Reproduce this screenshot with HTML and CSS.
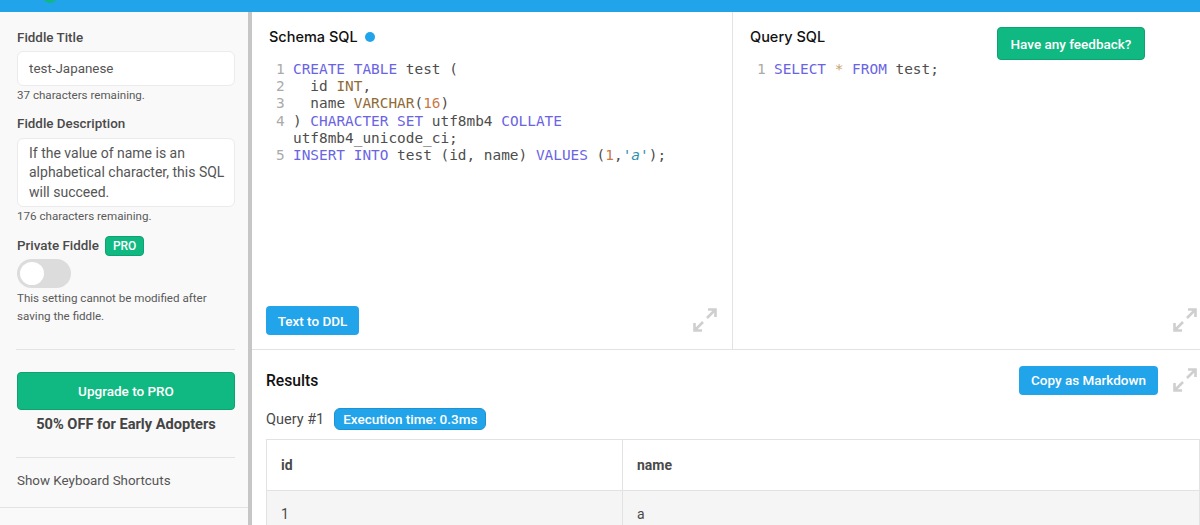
FILE: index.html
```html
<!DOCTYPE html>
<html lang="en">
<head>
  <meta charset="UTF-8">
  <meta name="viewport" content="width=device-width, initial-scale=1.0">
  <title>Fiddle</title>
  <link rel="stylesheet" href="styles.css">
</head>
<body>

  <!-- Top bar, logo is cut off by the window -->
  <header class="topbar">
    <span class="logo-edge"></span>
  </header>

  <div class="layout">
    <!-- Sidebar -->
    <aside class="sidebar">
      <div class="side-form">
        <label class="side-label">Fiddle Title</label>
        <div class="text-field">test-Japanese</div>
        <p class="hint">37 characters remaining.</p>

        <label class="side-label desc-label">Fiddle Description</label>
        <div class="text-area">
          <div>for the name column.</div>
          <div>If the value of name is an</div>
          <div>alphabetical character, this SQL</div>
          <div>will succeed.</div>
        </div>
        <p class="hint">176 characters remaining.</p>

        <div class="private-row">
          <span class="side-label">Private Fiddle</span>
          <span class="pro-badge">PRO</span>
        </div>
        <div class="toggle"><span class="toggle-knob"></span></div>
        <p class="hint setting-note">This setting cannot be modified after saving the fiddle.</p>
      </div>

      <div class="upgrade">
        <button class="btn btn-green upgrade-btn">Upgrade to PRO</button>
        <p class="upgrade-note">50% OFF for Early Adopters</p>
      </div>

      <div class="shortcuts">Show Keyboard Shortcuts</div>
      <div class="side-end"></div>
    </aside>

    <main class="content">
      <!-- Editors -->
      <section class="editors">
        <div class="editor editor-schema">
          <h2 class="editor-title">Schema SQL <span class="dirty-dot"></span></h2>
          <div class="code">
            <div class="line"><span class="num">1</span><span class="src"><span class="kw">CREATE</span> <span class="kw">TABLE</span> test (</span></div>
            <div class="line"><span class="num">2</span><span class="src">  id <span class="type">INT</span>,</span></div>
            <div class="line"><span class="num">3</span><span class="src">  name <span class="type">VARCHAR</span>(<span class="number">16</span>)</span></div>
            <div class="line"><span class="num">4</span><span class="src">) <span class="kw">CHARACTER</span> <span class="kw">SET</span> utf8mb4 <span class="kw">COLLATE</span> utf8mb4_unicode_ci;</span></div>
            <div class="line"><span class="num">5</span><span class="src"><span class="kw">INSERT</span> <span class="kw">INTO</span> test (id, name) <span class="kw">VALUES</span> (<span class="number">1</span>,<span class="string">'a'</span>);</span></div>
          </div>
          <div class="editor-foot">
            <button class="btn btn-blue ddl-btn">Text to DDL</button>
            <svg class="expand" viewBox="0 0 24 24"><path d="M15 1.5h7.5V9M22.5 1.5 14 10M1.5 15v7.5H9M1.5 22.5 10 14"/></svg>
          </div>
        </div>

        <div class="editor editor-query">
          <h2 class="editor-title">Query SQL</h2>
          <div class="code">
            <div class="line"><span class="num">1</span><span class="src"><span class="kw">SELECT</span> <span class="op">*</span> <span class="kw">FROM</span> test;</span></div>
          </div>
          <div class="editor-foot foot-right">
            <svg class="expand" viewBox="0 0 24 24"><path d="M15 1.5h7.5V9M22.5 1.5 14 10M1.5 15v7.5H9M1.5 22.5 10 14"/></svg>
          </div>
        </div>

        <button class="btn btn-green feedback-btn">Have any feedback?</button>
      </section>

      <!-- Results -->
      <section class="results">
        <div class="results-head">
          <h2 class="results-title">Results</h2>
          <button class="btn btn-blue copy-btn">Copy as Markdown</button>
          <svg class="expand" viewBox="0 0 24 24"><path d="M15 1.5h7.5V9M22.5 1.5 14 10M1.5 15v7.5H9M1.5 22.5 10 14"/></svg>
        </div>
        <div class="query-row">
          <span class="query-name">Query #1</span>
          <span class="time-badge">Execution time: 0.3ms</span>
        </div>
        <table class="result-table">
          <thead>
            <tr><th class="col-id">id</th><th>name</th></tr>
          </thead>
          <tbody>
            <tr><td>1</td><td>a</td></tr>
          </tbody>
        </table>
      </section>
    </main>
  </div>

</body>
</html>
```

FILE: styles.css
```css
html, body {
  height: 100%;
}
body {
  margin: 0;
  height: 525px;
  overflow: hidden;
  display: flex;
  flex-direction: column;
  font-family: Roboto, "Liberation Sans", sans-serif;
  color: #4a4a4a;
  background: #fff;
}
.topbar {
  height: 12px;
  flex: none;
  background: #22a4ea;
  position: relative;
  overflow: hidden;
}
.logo-edge {
  position: absolute;
  left: 43px;
  top: -11px;
  width: 14px;
  height: 14px;
  border-radius: 50%;
  background: #10b981;
}
.layout {
  flex: 1;
  display: flex;
  min-height: 0;
}

/* Sidebar */
.sidebar {
  width: 252px;
  flex: none;
  box-sizing: border-box;
  background: #f9f9f9;
  border-right: 4px solid #c6c6c6;
  display: flex;
  flex-direction: column;
}
.side-form {
  padding: 18px 13px 0 17px;
  height: 337px;
  box-sizing: border-box;
}
.side-label {
  display: block;
  font-size: 13.4px;
  font-weight: 500;
  line-height: 16px;
  color: #4a4a4a;
}
.text-field {
  margin-top: 5px;
  height: 35px;
  box-sizing: border-box;
  padding: 0 11px;
  display: flex;
  align-items: center;
  background: #fff;
  border: 1px solid #ebebeb;
  border-radius: 6px;
  font-size: 13.4px;
  color: #555;
}
.hint {
  margin: 2px 0 0;
  font-size: 11.6px;
  line-height: 15px;
  color: #5a5a5a;
}
.desc-label {
  margin-top: 13px;
}
.text-area {
  margin-top: 6px;
  height: 69px;
  box-sizing: border-box;
  padding: 0 11px 4px;
  display: flex;
  flex-direction: column;
  justify-content: flex-end;
  overflow: hidden;
  background: #fff;
  border: 1px solid #ebebeb;
  border-radius: 6px;
  font-size: 14px;
  line-height: 19.5px;
  color: #555;
}
.text-area div {
  flex: none;
  white-space: nowrap;
}
.private-row {
  margin-top: 12px;
  display: flex;
  align-items: center;
  gap: 6px;
}
.pro-badge {
  background: #10b981;
  color: #fff;
  font-size: 12px;
  font-weight: 500;
  line-height: 18px;
  padding: 0 7px;
  border: 1px solid #0ea271;
  border-radius: 4px;
}
.toggle {
  margin-top: 3px;
  width: 54px;
  height: 29px;
  border-radius: 15px;
  background: #dcdcdc;
  position: relative;
}
.toggle-knob {
  position: absolute;
  left: 3px;
  top: 3px;
  width: 24px;
  height: 23px;
  border-radius: 50%;
  background: #fff;
}
.setting-note {
  margin-top: 2px;
  line-height: 17.5px;
}
.upgrade {
  margin: 0 13px 0 16px;
  padding: 22px 0 0 1px;
  border-top: 1px solid #e3e3e3;
  height: 108px;
  box-sizing: border-box;
}
.upgrade-btn {
  display: block;
  width: 100%;
  height: 38px;
  font-size: 14px;
  border-color: #0d9f6f;
}
.upgrade-note {
  margin: 5px 0 0;
  text-align: center;
  font-size: 14.6px;
  font-weight: 700;
  line-height: 18px;
  color: #444;
}
.shortcuts {
  margin: 0 13px 0 16px;
  padding: 0 0 5px 1px;
  border-top: 1px solid #e3e3e3;
  height: 50px;
  box-sizing: border-box;
  display: flex;
  align-items: center;
  font-size: 13.4px;
  color: #555;
}
.side-end {
  border-top: 1px solid #e3e3e3;
  flex: 1;
}

/* Buttons */
.btn {
  font-family: inherit;
  font-size: 13.5px;
  font-weight: 500;
  color: #fff;
  border-radius: 4px;
  border: 1px solid transparent;
  padding: 0 11px;
  cursor: pointer;
}
.btn-green {
  background: #10b981;
  border-color: #0ea271;
}
.btn-blue {
  background: #22a4ea;
  height: 29px;
}

/* Editors */
.content {
  flex: 1;
  min-width: 0;
  display: flex;
  flex-direction: column;
}
.editors {
  height: 337px;
  flex: none;
  display: flex;
  position: relative;
  border-bottom: 1px solid #e2e2e2;
}
.editor {
  display: flex;
  flex-direction: column;
  box-sizing: border-box;
}
.editor-schema {
  width: 481px;
  border-right: 1px solid #e2e2e2;
  padding: 16px 15px 14px 17px;
}
.editor-query {
  flex: 1;
  padding: 16px 3px 14px 17px;
}
.editor-title {
  margin: 0;
  font-family: Inter, Roboto, sans-serif;
  font-size: 14.5px;
  font-weight: 500;
  line-height: 18px;
  color: #111;
  display: flex;
  align-items: center;
  gap: 7px;
}
.dirty-dot {
  width: 10px;
  height: 10px;
  border-radius: 50%;
  background: #22a4ea;
}
.code {
  margin-top: 15px;
  flex: 1;
  font-family: "DejaVu Sans Mono", "Liberation Mono", monospace;
  font-size: 14.42px;
  line-height: 17.2px;
  color: #4d4d4c;
}
.line {
  display: flex;
}
.num {
  width: 17px;
  flex: none;
  margin-left: 7px;
  color: #aaa;
}
.src {
  white-space: pre-wrap;
  min-width: 0;
}
.kw {
  color: #6a64e4;
}
.type {
  color: #8f6b37;
}
.number {
  color: #c8794a;
}
.string {
  color: #2f8fb0;
  font-style: italic;
}
.op {
  color: #c9a26a;
}
.editor-foot {
  display: flex;
  justify-content: space-between;
  align-items: flex-end;
  margin-left: -3px;
}
.foot-right {
  justify-content: flex-end;
}
.ddl-btn {
  width: 93px;
  padding: 0;
}
.expand {
  width: 24px;
  height: 24px;
  flex: none;
  margin-bottom: 3px;
  fill: none;
  stroke: #cfcfcf;
  stroke-width: 2.6;
}
.feedback-btn {
  position: absolute;
  top: 15px;
  right: 55px;
  height: 33px;
  width: 148px;
  padding: 0;
}

/* Results */
.results {
  flex: 1;
  min-height: 0;
  padding: 15px 0 0 14px;
}
.results-head {
  display: flex;
  align-items: center;
  height: 30px;
  padding-right: 3px;
}
.results-title {
  margin: 0;
  flex: 1;
  font-size: 15.7px;
  font-weight: 500;
  color: #111;
}
.copy-btn {
  margin-right: 15px;
  height: 29px;
  width: 139px;
  padding: 0;
}
.results-head .expand {
  margin-bottom: 0;
}
.query-row {
  margin-top: 13px;
  display: flex;
  align-items: center;
  gap: 10px;
}
.query-name {
  font-size: 14.5px;
}
.time-badge {
  background: #22a4ea;
  color: #fff;
  font-size: 13.5px;
  font-weight: 500;
  line-height: 20px;
  padding: 0 8px;
  border: 1px solid #1d93d3;
  border-radius: 6px;
}
.result-table {
  margin-top: 9px;
  width: 100%;
  border-collapse: collapse;
  font-size: 14px;
  table-layout: fixed;
}
.result-table th, .result-table td {
  border: 1px solid #e2e2e2;
  text-align: left;
  padding: 0 14px;
  height: 50px;
}
.result-table th {
  font-weight: 700;
  color: #4a4a4a;
}
.result-table td {
  background: #f5f5f5;
  height: 46px;
}
.col-id {
  width: 327px;
}
```
